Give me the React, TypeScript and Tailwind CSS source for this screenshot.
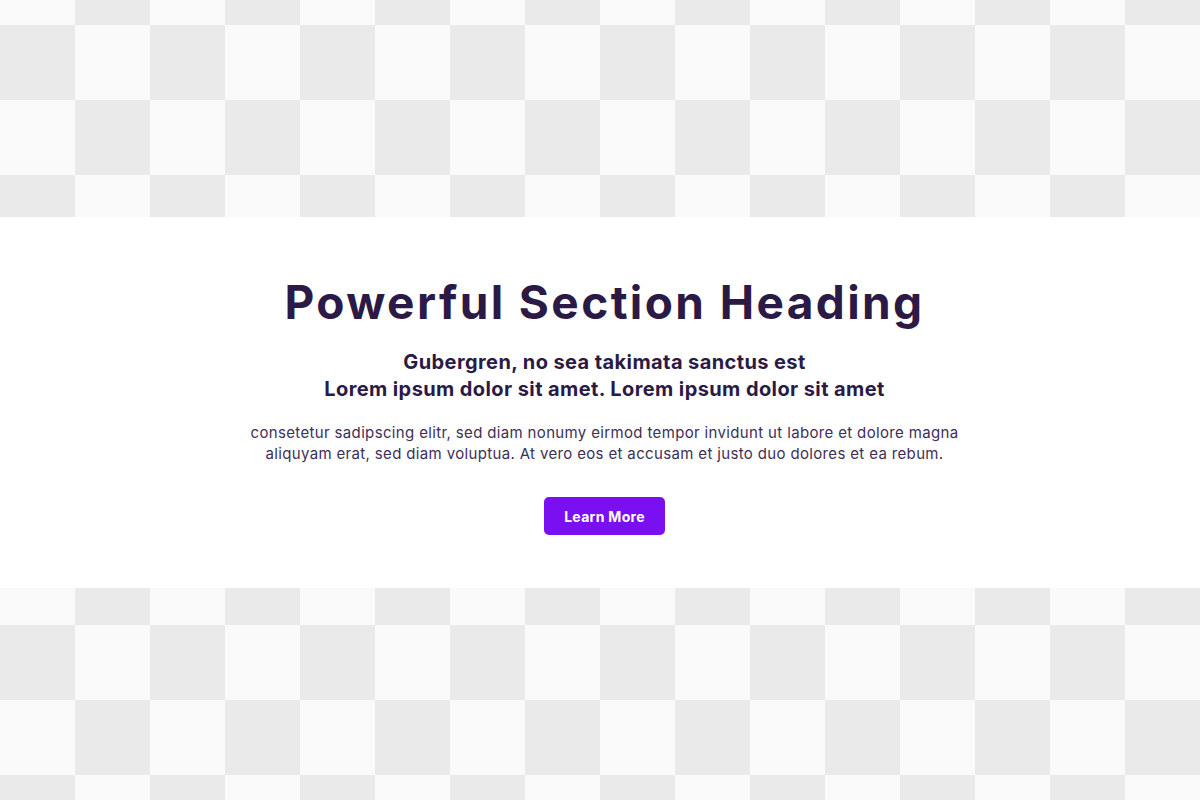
export default function App() {
  return (
    <div className="min-h-[800px] w-full bg-[image:conic-gradient(#eaeaea_25%,#fafafa_0_50%,#eaeaea_0_75%,#fafafa_0)] [background-size:150px_150px] [background-position:0_-50px] pt-[217px] pb-[212px]">
      <section className="bg-white flex flex-col items-center text-center pt-[59px] pb-[53px] pl-[9px] font-['Inter',sans-serif]">
        <h1 className="text-[46px] leading-[52px] font-bold text-[#2b1a45] tracking-[2.4px]">
          Powerful Section Heading
        </h1>
        <p className="mt-[21px] text-[20px] leading-[27px] font-bold text-[#2b1a45] tracking-[0.4px]">
          Gubergren, no sea takimata sanctus est
          <br />
          Lorem ipsum dolor sit amet. Lorem ipsum dolor sit amet
        </p>
        <p className="mt-[19px] text-[15px] leading-[21px] text-[#3d2f58] tracking-[0.35px]">
          consetetur sadipscing elitr, sed diam nonumy eirmod tempor invidunt ut labore et dolore magna
          <br />
          aliquyam erat, sed diam voluptua. At vero eos et accusam et justo duo dolores et ea rebum.
        </p>
        <button className="mt-[33px] h-[38px] w-[121px] rounded-[5px] bg-[#7a10f2] text-white text-[14px] font-bold tracking-[0.3px]">
          Learn More
        </button>
      </section>
    </div>
  );
}
